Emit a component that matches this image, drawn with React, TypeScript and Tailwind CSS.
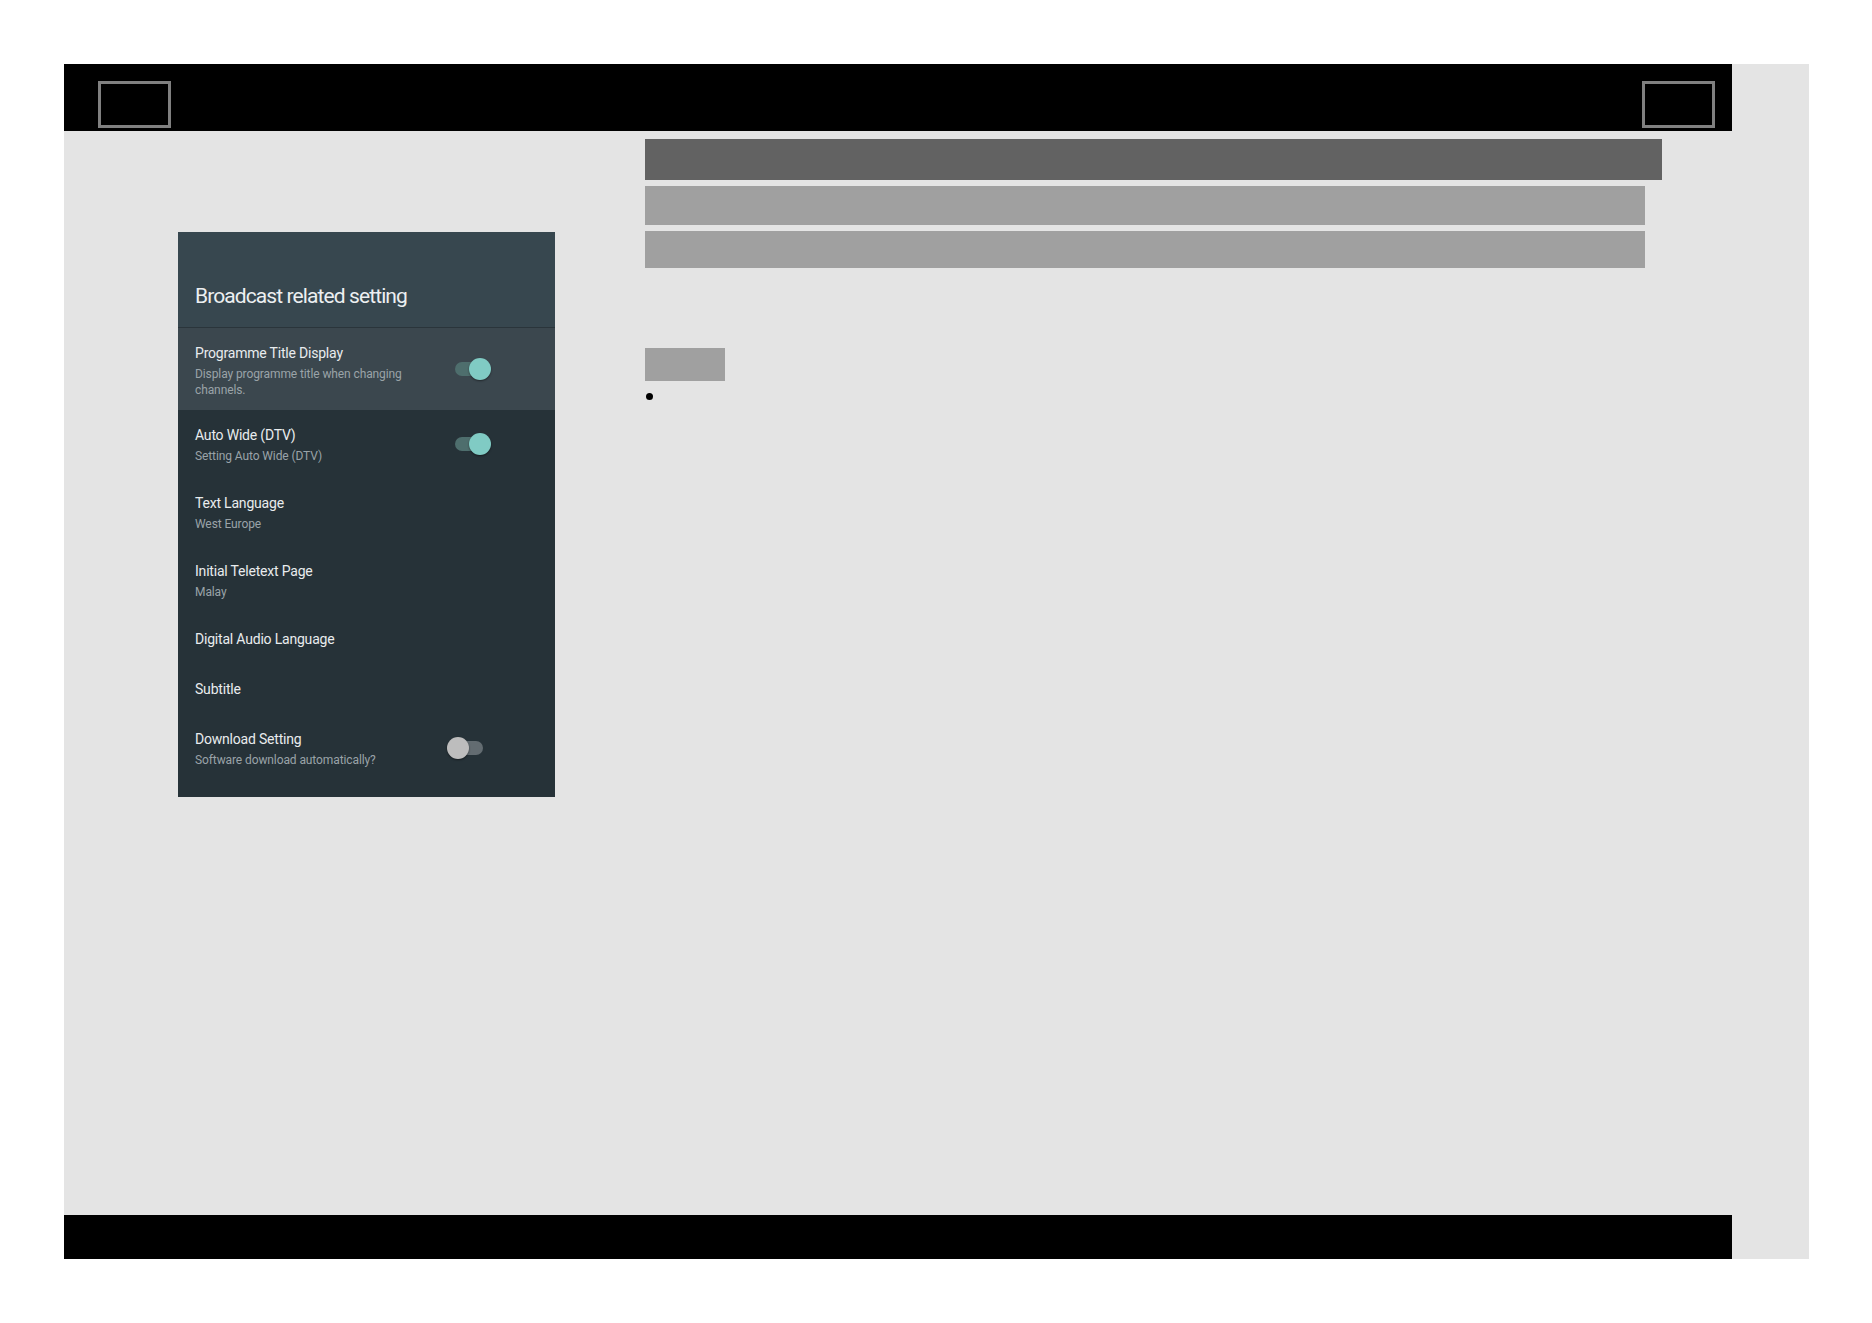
import React from 'react';

type Row = {
  title: string;
  sub?: string;
  toggle?: boolean;
  h: string;
  active?: boolean;
};

const rows: Row[] = [
  { title: 'Programme Title Display', sub: 'Display programme title when changing channels.', toggle: true, h: 'h-[82px]', active: true },
  { title: 'Auto Wide (DTV)', sub: 'Setting Auto Wide (DTV)', toggle: true, h: 'h-[68px]' },
  { title: 'Text Language', sub: 'West Europe', h: 'h-[68px]' },
  { title: 'Initial Teletext Page', sub: 'Malay', h: 'h-[68px]' },
  { title: 'Digital Audio Language', h: 'h-[50px]' },
  { title: 'Subtitle', h: 'h-[50px]' },
  { title: 'Download Setting', sub: 'Software download automatically?', toggle: false, h: 'h-[68px]' },
];

const Toggle: React.FC<{ on: boolean }> = ({ on }) => (
  <div className="relative w-[44px] h-[22px] shrink-0">
    <div
      className={`absolute left-[8px] top-[4px] w-[28px] h-[14px] rounded-full ${on ? 'bg-[#4e6e6d]' : 'bg-[#636c71]'}`}
    />
    <div
      className={`absolute top-0 w-[22px] h-[22px] rounded-full shadow-[0_1px_2px_rgba(0,0,0,0.45)] ${on ? 'left-[22px] bg-[#80cbc4]' : 'left-0 bg-[#bdbdbd]'}`}
    />
  </div>
);

const SettingsPanel: React.FC = () => (
  <div className="w-[377px] bg-[#263238] pb-[15px] font-['Roboto',sans-serif]">
    <div className="h-[96px] bg-[#37474f] flex items-end px-[17px] pb-[17px] border-b border-[#2a353b]">
      <h2 className="text-[21px] leading-[28px] text-[#eceff1] tracking-[-0.9px]">Broadcast related setting</h2>
    </div>
    {rows.map(r => (
      <div
        key={r.title}
        className={`${r.h} flex items-start justify-between pl-[17px] pr-[64px] pt-[15px] ${r.active ? 'bg-[#3b474e]' : ''}`}
      >
        <div className="max-w-[230px]">
          <div className="text-[14px] leading-[20px] text-[#e9ecee] tracking-[-0.2px]">{r.title}</div>
          {r.sub && (
            <div className="mt-[3px] text-[12px] leading-[16px] text-[#9aa3a8] tracking-[-0.1px]">{r.sub}</div>
          )}
        </div>
        {r.toggle !== undefined && (
          <div className="self-stretch flex items-center pb-[15px]">
            <Toggle on={r.toggle} />
          </div>
        )}
      </div>
    ))}
  </div>
);

export default function App() {
  return (
    <div className="min-h-screen bg-white pt-[64px] pl-[64px]">
      <div className="w-[1745px] h-[1195px] bg-[#e4e4e4] flex flex-col">
        {/* top bar */}
        <div className="w-[1668px] h-[67px] bg-black flex justify-between items-start pt-[17px] pl-[34px] pr-[17px]">
          <div className="w-[73px] h-[47px] border-[3px] border-[#808080]" />
          <div className="w-[73px] h-[47px] border-[3px] border-[#808080]" />
        </div>

        <div className="flex-1 flex">
          <div className="pl-[114px] pt-[101px]">
            <SettingsPanel />
          </div>
          <div className="ml-[90px] pt-[8px] flex flex-col">
            <div className="w-[1017px] h-[41px] bg-[#626262]" />
            <div className="mt-[6px] w-[1000px] h-[39px] bg-[#a0a0a0]" />
            <div className="mt-[6px] w-[1000px] h-[37px] bg-[#a0a0a0]" />
            <div className="mt-[80px] w-[80px] h-[33px] bg-[#a0a0a0]" />
            <div className="mt-[12px] ml-[1px] w-[7px] h-[7px] rounded-full bg-black" />
          </div>
        </div>

        {/* bottom bar */}
        <div className="w-[1668px] h-[44px] bg-black" />
      </div>
    </div>
  );
}
